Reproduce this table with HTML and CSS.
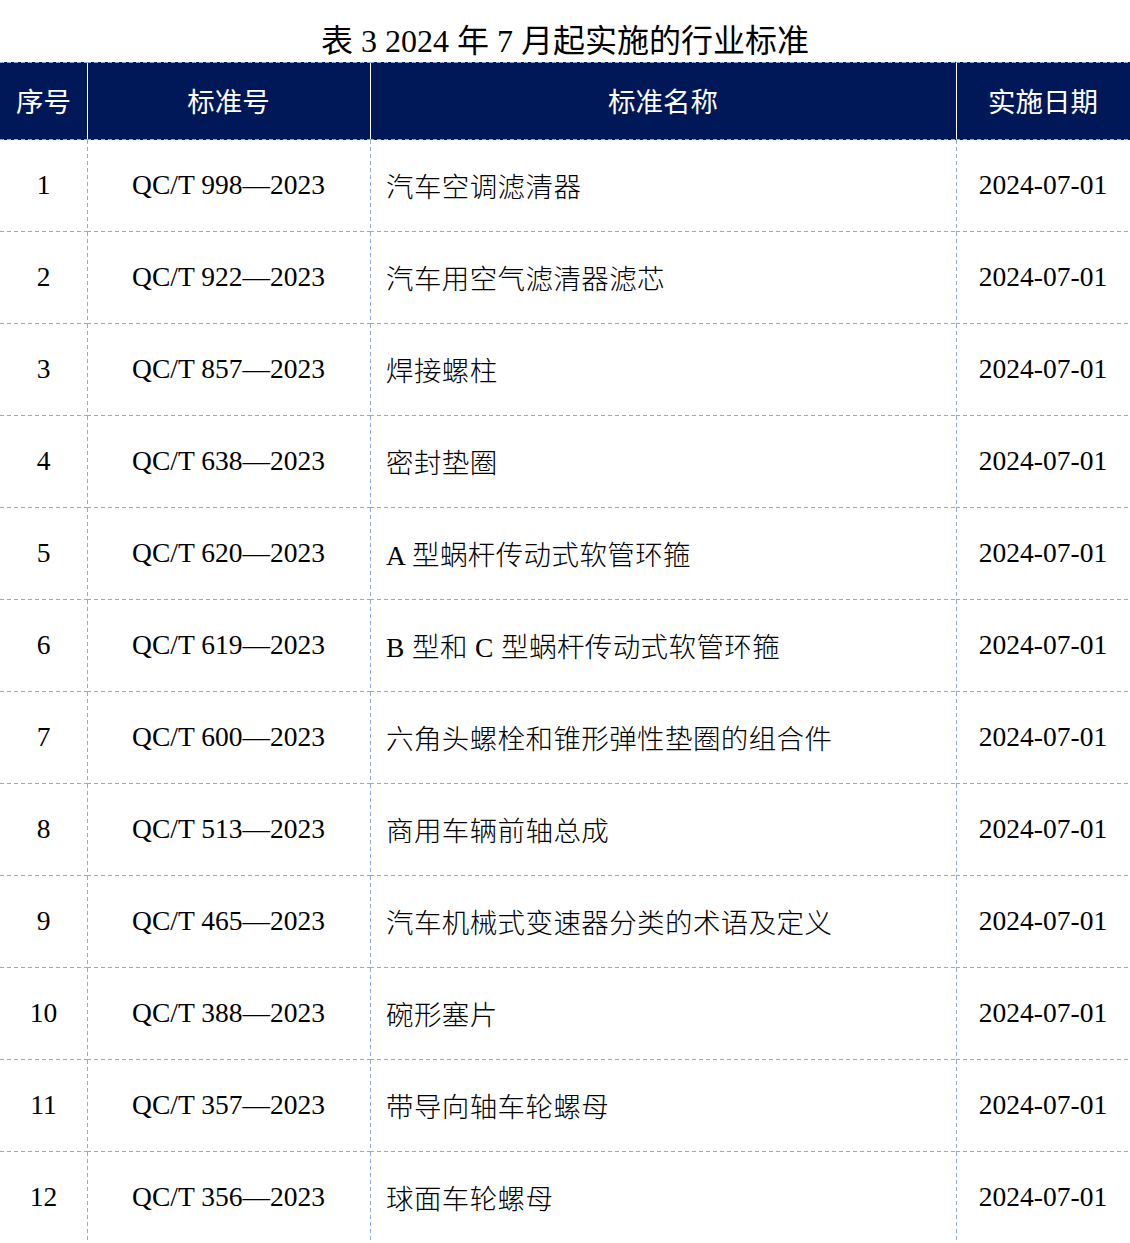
FILE: index.html
```html
<!DOCTYPE html>
<html lang="zh-CN">
<head>
<meta charset="utf-8">
<title>表 3 2024 年 7 月起实施的行业标准</title>
<link rel="stylesheet" href="styles.css">
</head>
<body>
<h1 class="title">表 3 2024 年 7 月起实施的行业标准</h1>
<table class="std-table">
  <colgroup>
    <col class="c-no">
    <col class="c-code">
    <col class="c-name">
    <col class="c-date">
  </colgroup>
  <thead>
    <tr><th>序号</th><th>标准号</th><th>标准名称</th><th>实施日期</th></tr>
  </thead>
  <tbody>
    <tr><td class="center">1</td><td class="center">QC/T 998—2023</td><td class="name">汽车空调滤清器</td><td class="center">2024-07-01</td></tr>
    <tr><td class="center">2</td><td class="center">QC/T 922—2023</td><td class="name">汽车用空气滤清器滤芯</td><td class="center">2024-07-01</td></tr>
    <tr><td class="center">3</td><td class="center">QC/T 857—2023</td><td class="name">焊接螺柱</td><td class="center">2024-07-01</td></tr>
    <tr><td class="center">4</td><td class="center">QC/T 638—2023</td><td class="name">密封垫圈</td><td class="center">2024-07-01</td></tr>
    <tr><td class="center">5</td><td class="center">QC/T 620—2023</td><td class="name">A 型蜗杆传动式软管环箍</td><td class="center">2024-07-01</td></tr>
    <tr><td class="center">6</td><td class="center">QC/T 619—2023</td><td class="name">B 型和 C 型蜗杆传动式软管环箍</td><td class="center">2024-07-01</td></tr>
    <tr><td class="center">7</td><td class="center">QC/T 600—2023</td><td class="name">六角头螺栓和锥形弹性垫圈的组合件</td><td class="center">2024-07-01</td></tr>
    <tr><td class="center">8</td><td class="center">QC/T 513—2023</td><td class="name">商用车辆前轴总成</td><td class="center">2024-07-01</td></tr>
    <tr><td class="center">9</td><td class="center">QC/T 465—2023</td><td class="name">汽车机械式变速器分类的术语及定义</td><td class="center">2024-07-01</td></tr>
    <tr><td class="center">10</td><td class="center">QC/T 388—2023</td><td class="name">碗形塞片</td><td class="center">2024-07-01</td></tr>
    <tr><td class="center">11</td><td class="center">QC/T 357—2023</td><td class="name">带导向轴车轮螺母</td><td class="center">2024-07-01</td></tr>
    <tr><td class="center">12</td><td class="center">QC/T 356—2023</td><td class="name">球面车轮螺母</td><td class="center">2024-07-01</td></tr>
  </tbody>
</table>
</body>
</html>
```

FILE: styles.css
```css
html, body {
  margin: 0;
  padding: 0;
  background: #ffffff;
}

body {
  width: 1130px;
  font-family: "Liberation Serif", "Noto Sans CJK SC", serif;
  color: #000000;
}

.title {
  margin: 0;
  height: 62px;
  box-sizing: border-box;
  padding-top: 20px;
  line-height: 42px;
  font-size: 32px;
  font-weight: 400;
  text-align: center;
  white-space: nowrap;
}

.std-table {
  width: 1130px;
  border-collapse: separate;
  border-spacing: 0;
  table-layout: fixed;
}

.c-no { width: 87px; }
.c-code { width: 283px; }
.c-name { width: 586px; }
.c-date { width: 174px; }

.std-table th {
  height: 78px;
  padding: 0 0 3px 0;
  box-sizing: border-box;
  background-color: #011858;
  background-image:
    repeating-linear-gradient(90deg, #8eaadb 0 4px, transparent 4px 7px),
    repeating-linear-gradient(90deg, #8eaadb 0 4px, transparent 4px 7px),
    linear-gradient(#ffffff, #ffffff);
  background-size: 100% 1px, 100% 1px, 1px 100%;
  background-position: left top, left bottom, left top;
  background-repeat: no-repeat;
  color: #ffffff;
  font-size: 27.5px;
  font-weight: 400;
  text-align: center;
  vertical-align: middle;
}

.std-table th:first-child {
  background-image:
    repeating-linear-gradient(90deg, #8eaadb 0 4px, transparent 4px 7px),
    repeating-linear-gradient(90deg, #8eaadb 0 4px, transparent 4px 7px);
  background-size: 100% 1px, 100% 1px;
  background-position: left top, left bottom;
}

.std-table td {
  height: 92px;
  padding: 0 0 2px 0;
  box-sizing: border-box;
  font-size: 27.5px;
  font-weight: 300;
  vertical-align: middle;
  white-space: nowrap;
  background-image:
    repeating-linear-gradient(90deg, #8eaadb 0 4px, transparent 4px 7px),
    repeating-linear-gradient(180deg, #8eaadb 0 4px, transparent 4px 7px);
  background-size: 100% 1px, 1px 100%;
  background-position: left bottom, left top;
  background-repeat: no-repeat;
}

.std-table td:first-child {
  background-image:
    repeating-linear-gradient(90deg, #8eaadb 0 4px, transparent 4px 7px);
  background-size: 100% 1px;
  background-position: left bottom;
}

.center {
  text-align: center;
}

.name {
  text-align: left;
  padding-left: 16px !important;
  letter-spacing: 0.4px;
}
```
